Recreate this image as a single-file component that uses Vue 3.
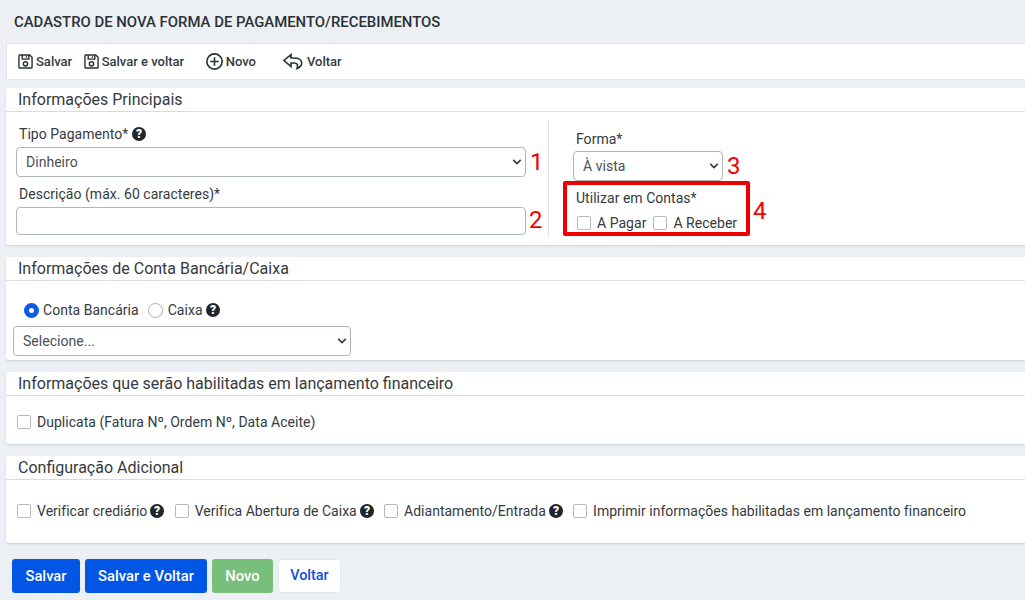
<script setup>
const extras = [
  { label: 'Verificar crediário', help: true },
  { label: 'Verifica Abertura de Caixa', help: true },
  { label: 'Adiantamento/Entrada', help: true },
  { label: 'Imprimir informações habilitadas em lançamento financeiro', help: false }
]
</script>

<template>
  <div class="page">
    <h1 class="title">CADASTRO DE NOVA FORMA DE PAGAMENTO/RECEBIMENTOS</h1>

    <div class="toolbar">
      <span class="tool t1">
        <svg class="ti" viewBox="0 0 16 16"><path d="M2 1h10.500L15 3.500V14a1 1 0 0 1-1 1H2a1 1 0 0 1-1-1V2a1 1 0 0 1 1-1z" /><path d="M4.500 1v4.500h7V1M9 2.500v1.500" /><circle cx="8" cy="10.500" r="2.300" /></svg>Salvar
      </span>
      <span class="tool t2">
        <svg class="ti" viewBox="0 0 16 16"><path d="M2 1h10.500L15 3.500V14a1 1 0 0 1-1 1H2a1 1 0 0 1-1-1V2a1 1 0 0 1 1-1z" /><path d="M4.500 1v4.500h7V1M9 2.500v1.500" /><circle cx="8" cy="10.500" r="2.300" /></svg>Salvar e voltar
      </span>
      <span class="tool t3">
        <svg class="ti big" viewBox="0 0 16 16"><circle cx="8" cy="8" r="7.200" /><path d="M8 4v8M4 8h8" /></svg>Novo
      </span>
      <span class="tool t4">
        <svg class="ti back" viewBox="0 0 20 16"><path d="M8 1 1 7l7 6V9.500h3c3 0 4.500 1.500 3 5.500 3.500-1.500 5-4 4.500-6.500C18 5.500 15 4.500 11 4.500H8z" /></svg>Voltar
      </span>
    </div>

    <section class="card c1">
      <h2>Informações Principais</h2>
      <div class="main">
        <div class="left">
          <label class="lab lab-tipo">Tipo Pagamento*
            <svg class="help" viewBox="1 1 14 14"><circle cx="8" cy="8" r="7" fill="#212529" /><text x="8" y="12.300" text-anchor="middle" font-size="12" font-weight="900" fill="#fff" font-family="Roboto">?</text></svg>
          </label>
          <div class="row-mark">
            <div class="select wide">Dinheiro<svg class="chev" viewBox="0 0 12 8"><path d="M1.500 1.500 6 6l4.500-4.500" /></svg></div>
            <span class="mark">1</span>
          </div>
          <label class="lab lab-desc">Descrição (máx. 60 caracteres)*</label>
          <div class="row-mark">
            <div class="input wide"></div>
            <span class="mark m2">2</span>
          </div>
        </div>
        <div class="right">
          <label class="lab lab-forma">Forma*</label>
          <div class="row-mark">
            <div class="select small">À vista<svg class="chev" viewBox="0 0 12 8"><path d="M1.500 1.500 6 6l4.500-4.500" /></svg></div>
            <span class="mark">3</span>
          </div>
          <div class="row-mark m-box">
            <div class="redbox">
              <div class="lab">Utilizar em Contas*</div>
              <div class="checks">
                <span class="chk"><i class="box"></i>A Pagar</span>
                <span class="chk"><i class="box"></i>A Receber</span>
              </div>
            </div>
            <span class="mark m4">4</span>
          </div>
        </div>
      </div>
    </section>

    <section class="card c2">
      <h2>Informações de Conta Bancária/Caixa</h2>
      <div class="radios">
        <i class="radio on"></i><span class="rl1">Conta Bancária</span>
        <i class="radio r2"></i><span class="rl2">Caixa</span>
        <svg class="help" viewBox="1 1 14 14"><circle cx="8" cy="8" r="7" fill="#212529" /><text x="8" y="12.300" text-anchor="middle" font-size="12" font-weight="900" fill="#fff" font-family="Roboto">?</text></svg>
      </div>
      <div class="select sel-conta">Selecione...<svg class="chev" viewBox="0 0 12 8"><path d="M1.500 1.500 6 6l4.500-4.500" /></svg></div>
    </section>

    <section class="card c3">
      <h2>Informações que serão habilitadas em lançamento financeiro</h2>
      <div class="line"><span class="chk"><i class="box"></i>Duplicata (Fatura Nº, Ordem Nº, Data Aceite)</span></div>
    </section>

    <section class="card c4">
      <h2>Configuração Adicional</h2>
      <div class="line extras">
        <span v-for="e in extras" :key="e.label" class="chk">
          <i class="box"></i>{{ e.label }}
          <svg v-if="e.help" class="help" viewBox="1 1 14 14"><circle cx="8" cy="8" r="7" fill="#212529" /><text x="8" y="12.300" text-anchor="middle" font-size="12" font-weight="900" fill="#fff" font-family="Roboto">?</text></svg>
        </span>
      </div>
    </section>

    <div class="actions">
      <button class="btn blue first">Salvar</button>
      <button class="btn blue">Salvar e Voltar</button>
      <button class="btn green">Novo</button>
      <button class="btn white">Voltar</button>
    </div>
  </div>
</template>

<style>
html, body { margin: 0; overflow: hidden; background: #eceff4; }
</style>

<style scoped>
.page {
  width: 1025px;
  height: 600px;
  overflow: hidden;
  box-sizing: border-box;
  padding: 13px 0 0 6px;
  background: #ecf0f5;
  font-family: Roboto, "Liberation Sans", sans-serif;
  font-size: 14px;
  line-height: 20px;
  letter-spacing: .03px;
  color: #343a40;
}
.title {
  margin: 0 0 12px 8px;
  font-size: 14.9px;
  font-weight: 500;
  line-height: 18px;
  height: 18px;
  color: #2b3035;
  white-space: nowrap;
  letter-spacing: 0;
}
.toolbar {
  display: flex;
  align-items: center;
  width: 1040px;
  height: 37px;
  box-sizing: border-box;
  background: #fff;
  border: 1px solid #e3e5e8;
  font-size: 13px;
  font-weight: 500;
  letter-spacing: 0;
  color: #343a40;
}
.tool { display: flex; align-items: center; gap: 3px; white-space: nowrap; }
.t1 { margin-left: 11px; }
.t2 { margin-left: 11.500px; }
.t3 { margin-left: 21.500px; }
.t4 { margin-left: 27px; gap: 4px; }
.ti { width: 15px; height: 15px; fill: none; stroke: #2b3035; stroke-width: 1.500; }
.ti.big { width: 17px; height: 17px; }
.ti.back { width: 20px; height: 17px; stroke-width: 1.600; }
.card {
  width: 1040px;
  box-sizing: border-box;
  background: #fff;
  border-radius: 3px;
  box-shadow: 0 1px 2px rgba(0, 0, 0, .14);
}
.card h2 {
  margin: 0;
  padding: 1px 0 0 12px;
  height: 24px;
  font-size: 16px;
  font-weight: 400;
  line-height: 22px;
  letter-spacing: 0;
  border-bottom: 1px solid #d9dbde;
  color: #343a40;
  box-sizing: border-box;
}
.c1 { margin-top: 8px; height: 157px; }
.c2 { margin-top: 12px; height: 103px; }
.c3 { margin-top: 12px; height: 72px; }
.c4 { margin-top: 12px; height: 87px; }
.main { display: flex; padding-top: 9px; }
.left {
  flex: none;
  width: 543px;
  height: 115px;
  padding-left: 10px;
  padding-top: 5px;
  box-sizing: border-box;
  border-right: 1px solid #dee0e3;
}
.lab { display: block; font-size: 14px; line-height: 20px; color: #343a40; }
.lab-tipo { margin: -4px 0 1px 3px; height: 24px; display: flex; align-items: center; gap: 4px; }
.lab-desc { margin-left: 3px; margin-top: 7px; height: 23px; }
.lab-forma { margin-top: 8px; height: 22px; margin-left: 27px; }
.row-mark { display: flex; align-items: center; }
.select, .input {
  box-sizing: border-box;
  background: #fff;
  border: 1px solid #adb5bd;
  border-radius: 4px;
  position: relative;
  flex: none;
  font-size: 14px;
  color: #495057;
  padding-left: 9px;
}
.select { height: 30px; line-height: 28px; }
.wide { width: 510px; }
.input { height: 28px; }
.small { width: 150px; margin-left: 24px; }
.sel-conta { width: 338px; margin-left: 7px; }
.chev {
  position: absolute;
  right: 3px;
  top: 10px;
  width: 10px;
  height: 8px;
  fill: none;
  stroke: #343a40;
  stroke-width: 2;
}
.mark { font-size: 24px; line-height: 28px; color: #f00000; margin-left: 4px; }
.m2 { margin-left: 3px; margin-top: -2px; }
.m4 { margin-left: 3px; margin-top: 5px; }
.m-box { margin-top: 0; margin-left: 14px; }
.redbox {
  box-sizing: border-box;
  width: 187px;
  height: 55px;
  border: 4px solid #ee0000;
  border-radius: 2px;
  padding: 0 0 0 9px;
}
.redbox .lab { line-height: 18px; margin-top: 4px; height: 24px; }
.checks { display: flex; gap: 7px; line-height: 20px; }
.chk { display: inline-flex; align-items: center; white-space: nowrap; color: #343a40; font-size: 14px; }
.box {
  display: inline-block;
  box-sizing: border-box;
  width: 14px;
  height: 14px;
  margin-right: 6px;
  background: #fff;
  border: 1px solid #b5bac0;
  border-radius: 2px;
}
.checks .box { margin-left: 1px; }
.checks .chk + .chk .box { margin-left: 0; }
.radios { display: flex; align-items: center; height: 20px; margin: 19px 0 6px 18px; }
.radio {
  display: inline-block;
  box-sizing: border-box;
  width: 15px;
  height: 15px;
  border: 1px solid #a9aeb4;
  border-radius: 50%;
  background: #fff;
  margin-right: 4px;
}
.radio.r2 { margin-right: 5px; }
.radio.on { border: 5px solid #0d5ce8; }
.rl1 { margin-right: 9px; }
.rl2 { margin-right: 3px; }
.help { width: 14px; height: 14px; flex: none; }
.line { display: flex; align-items: center; padding-left: 11px; height: 20px; margin-top: 16px; }
.c4 .line { margin-top: 21px; }
.extras { gap: 10.300px; letter-spacing: 0; }
.extras .chk { letter-spacing: .015px; }
.extras .help { margin-left: 3px; }
.actions { display: flex; gap: 5px; margin-top: 16px; margin-left: 6px; }
.btn {
  height: 34px;
  box-sizing: border-box;
  border: 1px solid transparent;
  border-radius: 3px;
  padding: 0 12px;
  font: 500 14.800px/20px Roboto, "Liberation Sans", sans-serif;
  color: #fff;
}
.first { width: 68px; padding: 0; }
.blue { background: #0156e6; }
.green { background: #79bf7c; width: 61px; padding: 0; }
.white { background: #fff; color: #0d4fe0; border-color: #e6e8eb; width: 63px; padding: 0; font-size: 14.400px; }
</style>
